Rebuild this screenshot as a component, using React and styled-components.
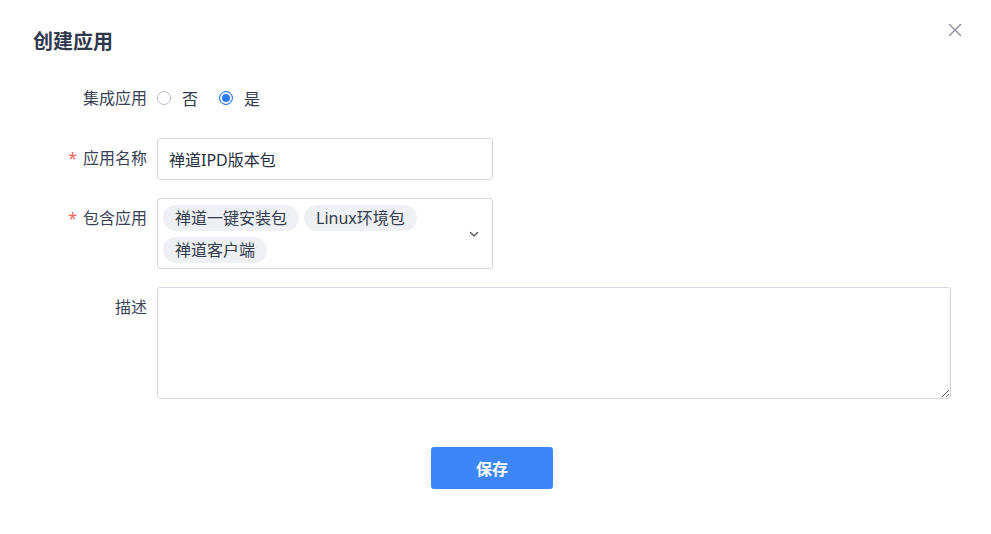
import React, { useState } from 'react'
import styled, { createGlobalStyle } from 'styled-components'

const Global = createGlobalStyle`
  html, body { margin: 0; background: #fff; }
  body {
    font-family: "Noto Sans", "Noto Sans CJK SC", sans-serif;
    color: #333b4d;
  }
`

export default function App() {
  const [integrated, setIntegrated] = useState(true)
  const [name, setName] = useState('禅道IPD版本包')
  const tags = ['禅道一键安装包', 'Linux环境包', '禅道客户端']

  return (
    <Page>
      <Global />
      <Header>
        <Title>创建应用</Title>
        <Close aria-label="close">
          <svg width="14" height="14" viewBox="0 0 14 14">
            <path d="M1.5 1.5 L12.5 12.5 M12.5 1.5 L1.5 12.5" stroke="#8b909c" strokeWidth="1.4" strokeLinecap="round" />
          </svg>
        </Close>
      </Header>

      <Form>
        <RadioRow>
          <Label>集成应用</Label>
          <RadioGroup>
            <RadioItem onClick={() => setIntegrated(false)}>
              <Dot $on={!integrated} />
              否
            </RadioItem>
            <RadioItem onClick={() => setIntegrated(true)}>
              <Dot $on={integrated} />
              是
            </RadioItem>
          </RadioGroup>
        </RadioRow>

        <Row>
          <Label $required>应用名称</Label>
          <Input value={name} onChange={(e) => setName(e.target.value)} />
        </Row>

        <Row>
          <Label $required>包含应用</Label>
          <Select>
            <Tags>
              {tags.map((t) => <Tag key={t}>{t}</Tag>)}
            </Tags>
            <Caret width="12" height="12" viewBox="0 0 12 12">
              <path d="M2.5 4.5 L6 8 L9.5 4.5" fill="none" stroke="#4a5060" strokeWidth="1.2" strokeLinecap="round" strokeLinejoin="round" />
            </Caret>
          </Select>
        </Row>

        <Row>
          <Label>描述</Label>
          <TextArea />
        </Row>

        <Actions>
          <SaveButton>保存</SaveButton>
        </Actions>
      </Form>
    </Page>
  )
}

const Page = styled.div`
  width: 991px;
  height: 534px;
  box-sizing: border-box;
  padding: 28px 29px 0 33px;
`

const Header = styled.div`
  display: flex;
  justify-content: space-between;
  align-items: flex-start;
  height: 28px;
`

const Title = styled.h1`
  margin: 0;
  font-size: 20px;
  line-height: 28px;
  font-weight: 700;
  color: #2f384c;
`

const Close = styled.button`
  border: none;
  background: none;
  padding: 0;
  margin-top: -5px;
  width: 14px;
  height: 14px;
  display: flex;
  cursor: pointer;
`

const Form = styled.div`
  margin-top: 22px;
  width: 918px;
  display: flex;
  flex-direction: column;
  gap: 18px;
`

const Row = styled.div`
  display: flex;
  align-items: flex-start;
  gap: 10px;
`

const RadioRow = styled(Row)`
  height: 40px;
  align-items: center;
  margin-bottom: 2px;
`

const Label = styled.label`
  width: 114px;
  flex: none;
  text-align: right;
  font-size: 16px;
  line-height: 40px;
  color: #3a4256;

  &::before {
    content: ${(p) => (p.$required ? '"*"' : 'none')};
    color: #f0605a;
    margin-right: 6px;
  }
`

const RadioGroup = styled.div`
  display: flex;
  align-items: center;
  gap: 21px;
`

const RadioItem = styled.span`
  display: flex;
  align-items: center;
  gap: 11px;
  font-size: 16px;
  color: #2f384c;
  cursor: pointer;
`

const Dot = styled.span`
  width: 14px;
  height: 14px;
  box-sizing: border-box;
  border-radius: 50%;
  border: 1px solid ${(p) => (p.$on ? '#2f7bf5' : '#b9bdc9')};
  background: ${(p) => (p.$on ? '#2f7bf5' : '#fff')};
  box-shadow: ${(p) => (p.$on ? 'inset 0 0 0 2px #fff' : 'none')};
`

const fieldBox = `
  box-sizing: border-box;
  border: 1px solid #d2d6e2;
  border-radius: 3px;
  background: #fff;
  font-family: "Noto Sans", "Noto Sans CJK SC", sans-serif;
`

const Input = styled.input`
  ${fieldBox}
  width: 336px;
  height: 42px;
  padding: 0 11px;
  font-size: 16px;
  color: #262e40;
  outline: none;
`

const Select = styled.div`
  ${fieldBox}
  width: 336px;
  height: 71px;
  padding: 6px 12px 6px 5px;
  display: flex;
  align-items: center;
  justify-content: space-between;
`

const Tags = styled.div`
  display: flex;
  flex-wrap: wrap;
  align-self: flex-start;
  gap: 6px 5px;
  width: 270px;
`

const Tag = styled.span`
  height: 26px;
  line-height: 26px;
  padding: 0 12px;
  border-radius: 13px;
  background: #eef0f3;
  font-size: 16px;
  color: #333b4d;
  white-space: nowrap;
`

const Caret = styled.svg`
  flex: none;
`

const TextArea = styled.textarea`
  ${fieldBox}
  width: 794px;
  height: 112px;
  padding: 8px 11px;
  font-size: 16px;
  outline: none;
`

const Actions = styled.div`
  display: flex;
  justify-content: center;
  margin-top: 30px;
`

const SaveButton = styled.button`
  width: 122px;
  height: 42px;
  border: none;
  border-radius: 3px;
  background: #3d86f8;
  color: #fff;
  font-family: "Noto Sans", "Noto Sans CJK SC", sans-serif;
  font-size: 16px;
  font-weight: 700;
  cursor: pointer;
`
